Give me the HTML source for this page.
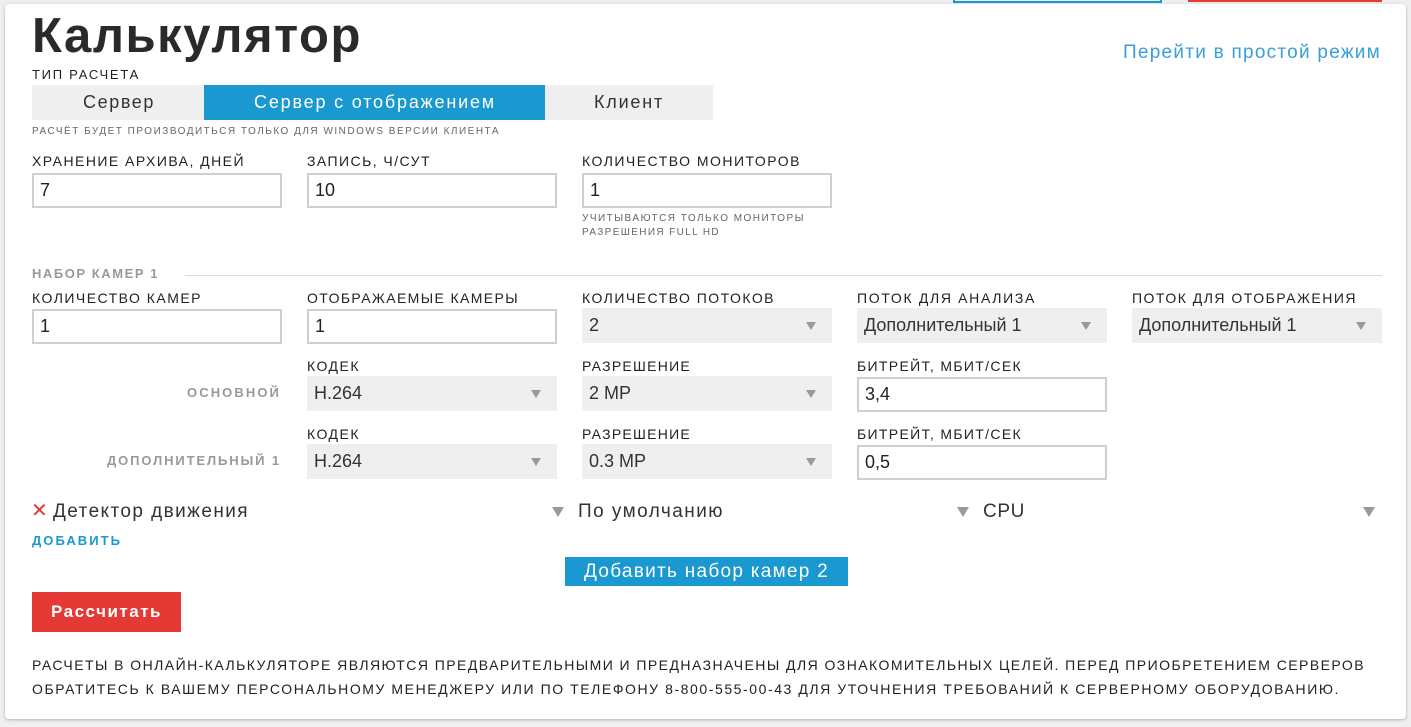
<!DOCTYPE html>
<html><head><meta charset="utf-8">
<style>
html,body{margin:0;padding:0;width:1411px;height:727px;overflow:hidden;background:#efefef;font-family:"Liberation Sans","DejaVu Sans",sans-serif;color:#222}
.card{position:absolute;left:5px;top:4px;width:1401px;height:715px;background:#fff;border-radius:4px;box-shadow:0 1px 3px rgba(0,0,0,.25)}
.t{position:absolute;white-space:nowrap;line-height:1}
.lab{font-size:14px;color:#222}
.sm{font-size:10px;color:#666}
.inp{position:absolute;box-sizing:border-box;height:35px;width:250px;border:2px solid #cfcfcf;background:#fff;font-size:18px;padding-left:6px;line-height:31px;color:#222}
.sel{position:absolute;box-sizing:border-box;height:35px;width:250px;background:#efefef;font-size:18px;padding-left:7px;line-height:35px;color:#333}
.sel:after{content:"";position:absolute;right:16px;top:14px;border-left:5px solid transparent;border-right:5px solid transparent;border-top:8px solid #999}
.arr{position:absolute;width:0;height:0;border-left:6px solid transparent;border-right:6px solid transparent;border-top:10px solid #999}
.gl{font-size:13px;font-weight:bold;color:#999}
</style></head><body>
<div style="position:absolute;left:953px;top:-3px;width:205px;height:4px;border:2px solid #1a98d0;border-top:none"></div>
<div style="position:absolute;left:1188px;top:0;width:194px;height:2px;background:#e53935"></div>
<div class="card"></div>

<div class="t" style="left:32px;top:12px;font-size:49px;font-weight:bold;color:#2a2a2a;--w:330px">Калькулятор</div>
<div class="t" style="left:1123px;top:43px;font-size:19px;color:#3a9fd4;--w:258px">Перейти в простой режим</div>
<div class="t" style="left:32px;top:68px;font-size:13px;--w:108px">ТИП РАСЧЕТА</div>

<div style="position:absolute;left:32px;top:85px;width:681px;height:35px;background:#efefef"></div>
<div style="position:absolute;left:204px;top:85px;width:341px;height:35px;background:#1a98d0"></div>
<div class="t" style="left:83px;top:93px;font-size:18px;color:#333;--w:72px">Сервер</div>
<div class="t" style="left:254px;top:93px;font-size:18px;color:#fff;--w:242px">Сервер с отображением</div>
<div class="t" style="left:594px;top:93px;font-size:18px;color:#333;--w:70px">Клиент</div>
<div class="t sm" style="left:32px;top:127px;--w:468px">РАСЧЁТ БУДЕТ ПРОИЗВОДИТЬСЯ ТОЛЬКО ДЛЯ WINDOWS ВЕРСИИ КЛИЕНТА</div>

<div class="t lab" style="left:32px;top:154px;--w:213px">ХРАНЕНИЕ АРХИВА, ДНЕЙ</div>
<div class="t lab" style="left:307px;top:154px;--w:124px">ЗАПИСЬ, Ч/СУТ</div>
<div class="t lab" style="left:582px;top:154px;--w:219px">КОЛИЧЕСТВО МОНИТОРОВ</div>
<div class="inp" style="left:32px;top:173px">7</div>
<div class="inp" style="left:307px;top:173px">10</div>
<div class="inp" style="left:582px;top:173px">1</div>
<div class="t sm" style="left:582px;top:214px;--w:223px">УЧИТЫВАЮТСЯ ТОЛЬКО МОНИТОРЫ</div>
<div class="t sm" style="left:582px;top:228px;--w:138px">РАЗРЕШЕНИЯ FULL HD</div>

<div class="t gl" style="left:32px;top:267px;--w:127px">НАБОР КАМЕР 1</div>
<div style="position:absolute;left:185px;top:275px;width:1197px;height:1px;background:#ddd"></div>

<div class="t lab" style="left:32px;top:291px;--w:170px">КОЛИЧЕСТВО КАМЕР</div>
<div class="t lab" style="left:307px;top:291px;--w:212px">ОТОБРАЖАЕМЫЕ КАМЕРЫ</div>
<div class="t lab" style="left:582px;top:291px;--w:193px">КОЛИЧЕСТВО ПОТОКОВ</div>
<div class="t lab" style="left:857px;top:291px;--w:179px">ПОТОК ДЛЯ АНАЛИЗА</div>
<div class="t lab" style="left:1132px;top:291px;--w:225px">ПОТОК ДЛЯ ОТОБРАЖЕНИЯ</div>
<div class="inp" style="left:32px;top:309px">1</div>
<div class="inp" style="left:307px;top:309px">1</div>
<div class="sel" style="left:582px;top:308px">2</div>
<div class="sel" style="left:857px;top:308px">Дополнительный 1</div>
<div class="sel" style="left:1132px;top:308px">Дополнительный 1</div>

<div class="t lab" style="left:307px;top:359px;--w:53px">КОДЕК</div>
<div class="t lab" style="left:582px;top:359px;--w:109px">РАЗРЕШЕНИЕ</div>
<div class="t lab" style="left:857px;top:359px;--w:165px">БИТРЕЙТ, МБИТ/СЕК</div>
<div class="t gl" style="left:187px;top:386px;--w:94px">ОСНОВНОЙ</div>
<div class="sel" style="left:307px;top:376px">H.264</div>
<div class="sel" style="left:582px;top:376px">2 MP</div>
<div class="inp" style="left:857px;top:377px">3,4</div>

<div class="t lab" style="left:307px;top:427px;--w:53px">КОДЕК</div>
<div class="t lab" style="left:582px;top:427px;--w:109px">РАЗРЕШЕНИЕ</div>
<div class="t lab" style="left:857px;top:427px;--w:165px">БИТРЕЙТ, МБИТ/СЕК</div>
<div class="t gl" style="left:107px;top:454px;--w:174px">ДОПОЛНИТЕЛЬНЫЙ 1</div>
<div class="sel" style="left:307px;top:444px">H.264</div>
<div class="sel" style="left:582px;top:444px">0.3 MP</div>
<div class="inp" style="left:857px;top:445px">0,5</div>

<div class="t" style="left:31px;top:501px;font-size:20px;font-weight:bold;color:#e53935">✕</div>
<div class="t" style="left:53px;top:502px;font-size:19px;color:#333;--w:196px">Детектор движения</div>
<div class="arr" style="left:552px;top:507px"></div>
<div class="t" style="left:578px;top:502px;font-size:19px;color:#333;--w:146px">По умолчанию</div>
<div class="arr" style="left:957px;top:507px"></div>
<div class="t" style="left:983px;top:502px;font-size:19px;color:#333;--w:42px">CPU</div>
<div class="arr" style="left:1363px;top:507px"></div>
<div class="t gl" style="left:32px;top:534px;color:#1a98d0;--w:90px">ДОБАВИТЬ</div>

<div style="position:absolute;left:565px;top:557px;width:283px;height:29px;background:#1a98d0"></div>
<div class="t" style="left:584px;top:562px;font-size:19px;color:#fff;--w:245px">Добавить набор камер 2</div>
<div style="position:absolute;left:32px;top:592px;width:149px;height:40px;background:#e53935"></div>
<div class="t" style="left:51px;top:603px;font-size:17px;font-weight:bold;color:#fff;--w:111px">Рассчитать</div>

<div class="t" style="left:32px;top:658px;font-size:14px;color:#222;--w:1333px">РАСЧЕТЫ В ОНЛАЙН-КАЛЬКУЛЯТОРЕ ЯВЛЯЮТСЯ ПРЕДВАРИТЕЛЬНЫМИ И ПРЕДНАЗНАЧЕНЫ ДЛЯ ОЗНАКОМИТЕЛЬНЫХ ЦЕЛЕЙ. ПЕРЕД ПРИОБРЕТЕНИЕМ СЕРВЕРОВ</div>
<div class="t" style="left:32px;top:682px;font-size:14px;color:#222;--w:1308px">ОБРАТИТЕСЬ К ВАШЕМУ ПЕРСОНАЛЬНОМУ МЕНЕДЖЕРУ ИЛИ ПО ТЕЛЕФОНУ 8-800-555-00-43 ДЛЯ УТОЧНЕНИЯ ТРЕБОВАНИЙ К СЕРВЕРНОМУ ОБОРУДОВАНИЮ.</div>

<script>
document.querySelectorAll('.t').forEach(function(e){
  var w=parseFloat(getComputedStyle(e).getPropertyValue('--w'));
  if(!w)return;
  var n=e.textContent.length;
  var r=e.getBoundingClientRect().width;
  var ls=(w-r)/n;
  if(ls>-1.2){e.style.letterSpacing=ls+'px';}
  else{e.style.transformOrigin='0 0';e.style.transform='scaleX('+(w/r)+')';}
});
</script>
</body></html>
